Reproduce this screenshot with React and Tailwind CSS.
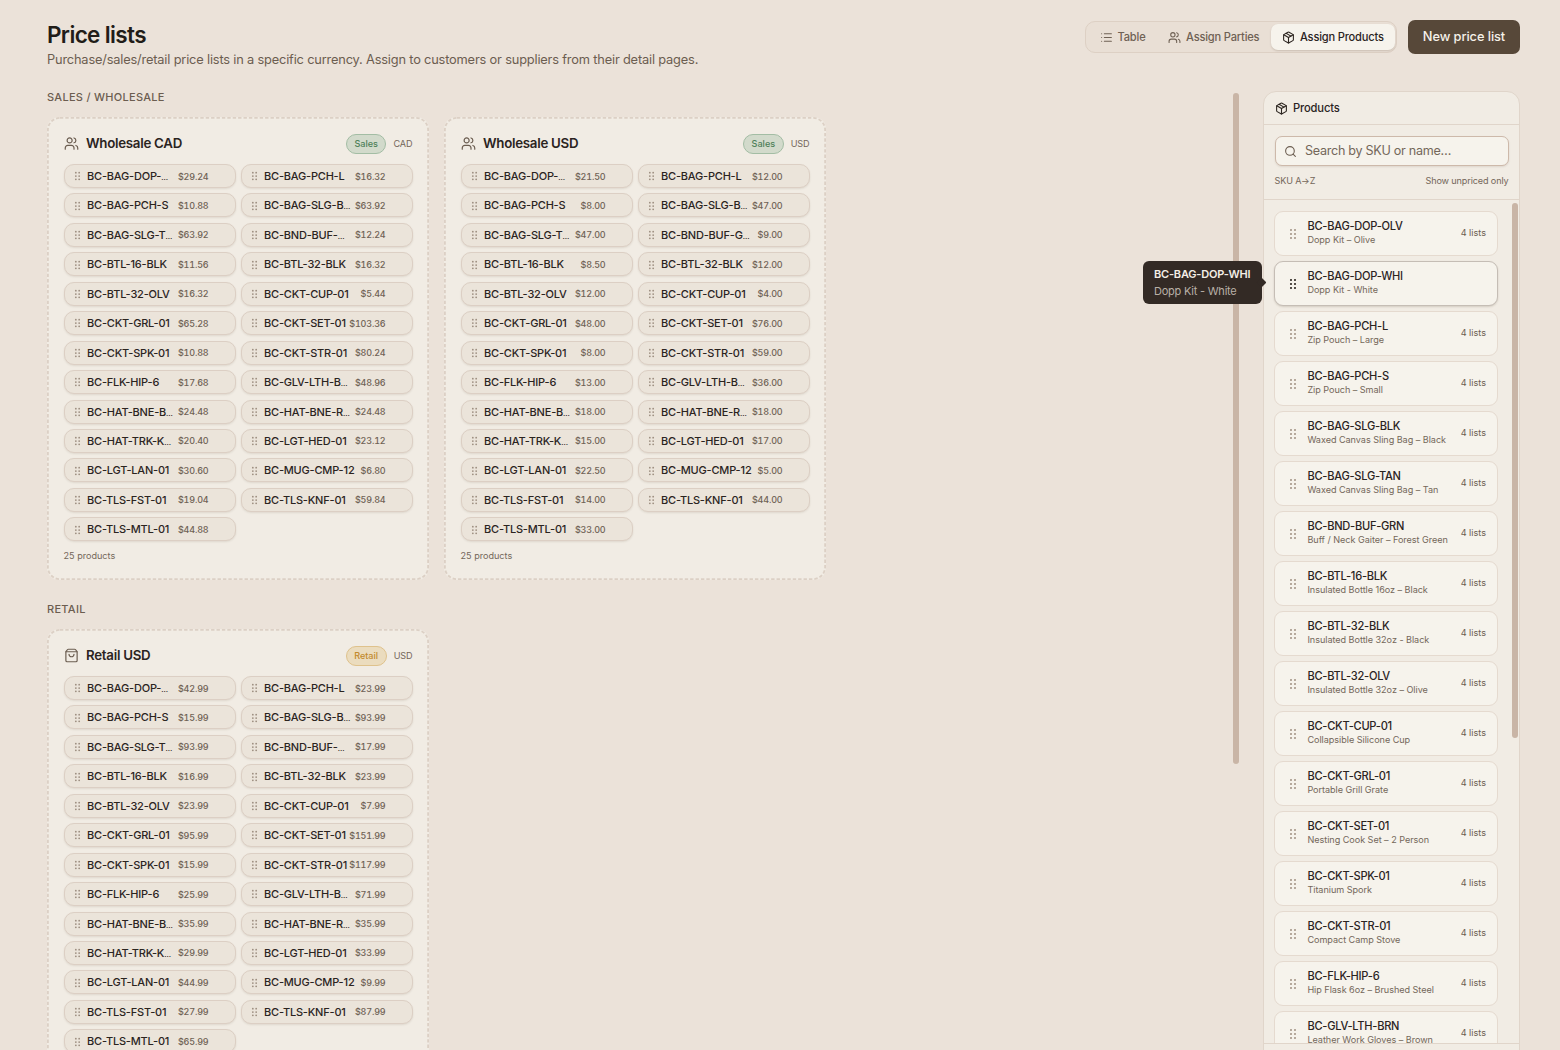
import React, { useState } from "react";
import { List, Users, Package, Search, ShoppingBag } from "lucide-react";

const SKUS = [
  "BC-BAG-DOP-…",
  "BC-BAG-PCH-L",
  "BC-BAG-PCH-S",
  "BC-BAG-SLG-B…",
  "BC-BAG-SLG-T…",
  "BC-BND-BUF-…",
  "BC-BTL-16-BLK",
  "BC-BTL-32-BLK",
  "BC-BTL-32-OLV",
  "BC-CKT-CUP-01",
  "BC-CKT-GRL-01",
  "BC-CKT-SET-01",
  "BC-CKT-SPK-01",
  "BC-CKT-STR-01",
  "BC-FLK-HIP-6",
  "BC-GLV-LTH-B…",
  "BC-HAT-BNE-B…",
  "BC-HAT-BNE-R…",
  "BC-HAT-TRK-K…",
  "BC-LGT-HED-01",
  "BC-LGT-LAN-01",
  "BC-MUG-CMP-12",
  "BC-TLS-FST-01",
  "BC-TLS-KNF-01",
  "BC-TLS-MTL-01",
];

const wholesaleCad = {
  name: "Wholesale CAD",
  kind: "Sales",
  currency: "CAD",
  prices: [
    "29.24", "16.32", "10.88", "63.92", "63.92", "12.24", "11.56", "16.32", "16.32",
    "5.44", "65.28", "103.36", "10.88", "80.24", "17.68", "48.96", "24.48", "24.48",
    "20.40", "23.12", "30.60", "6.80", "19.04", "59.84", "44.88",
  ],
};

const wholesaleUsd = {
  name: "Wholesale USD",
  kind: "Sales",
  currency: "USD",
  labels: { 5: "BC-BND-BUF-G…" },
  prices: [
    "21.50", "12.00", "8.00", "47.00", "47.00", "9.00", "8.50", "12.00", "12.00",
    "4.00", "48.00", "76.00", "8.00", "59.00", "13.00", "36.00", "18.00", "18.00",
    "15.00", "17.00", "22.50", "5.00", "14.00", "44.00", "33.00",
  ],
};

const retailUsd = {
  name: "Retail USD",
  kind: "Retail",
  currency: "USD",
  prices: [
    "42.99", "23.99", "15.99", "93.99", "93.99", "17.99", "16.99", "23.99", "23.99",
    "7.99", "95.99", "151.99", "15.99", "117.99", "25.99", "71.99", "35.99", "35.99",
    "29.99", "33.99", "44.99", "9.99", "27.99", "87.99", "65.99",
  ],
};

const products = [
  { sku: "BC-BAG-DOP-OLV", name: "Dopp Kit – Olive", lists: 4 },
  { sku: "BC-BAG-DOP-WHI", name: "Dopp Kit - White", lists: 0 },
  { sku: "BC-BAG-PCH-L", name: "Zip Pouch – Large", lists: 4 },
  { sku: "BC-BAG-PCH-S", name: "Zip Pouch – Small", lists: 4 },
  { sku: "BC-BAG-SLG-BLK", name: "Waxed Canvas Sling Bag – Black", lists: 4 },
  { sku: "BC-BAG-SLG-TAN", name: "Waxed Canvas Sling Bag – Tan", lists: 4 },
  { sku: "BC-BND-BUF-GRN", name: "Buff / Neck Gaiter – Forest Green", lists: 4 },
  { sku: "BC-BTL-16-BLK", name: "Insulated Bottle 16oz – Black", lists: 4 },
  { sku: "BC-BTL-32-BLK", name: "Insulated Bottle 32oz - Black", lists: 4 },
  { sku: "BC-BTL-32-OLV", name: "Insulated Bottle 32oz – Olive", lists: 4 },
  { sku: "BC-CKT-CUP-01", name: "Collapsible Silicone Cup", lists: 4 },
  { sku: "BC-CKT-GRL-01", name: "Portable Grill Grate", lists: 4 },
  { sku: "BC-CKT-SET-01", name: "Nesting Cook Set – 2 Person", lists: 4 },
  { sku: "BC-CKT-SPK-01", name: "Titanium Spork", lists: 4 },
  { sku: "BC-CKT-STR-01", name: "Compact Camp Stove", lists: 4 },
  { sku: "BC-FLK-HIP-6", name: "Hip Flask 6oz – Brushed Steel", lists: 4 },
  { sku: "BC-GLV-LTH-BRN", name: "Leather Work Gloves – Brown", lists: 4 },
];

// Six-dot drag handle
const Grip = ({ className }) => (
  <svg viewBox="0 0 8 12" className={className} fill="currentColor">
    {[2, 6, 10].map((y) => (
      <g key={y}>
        <circle cx="2" cy={y} r="1.05" />
        <circle cx="6" cy={y} r="1.05" />
      </g>
    ))}
  </svg>
);

const ViewTab = ({ icon: Icon, label, active, onClick }) => (
  <button
    onClick={onClick}
    className={`flex h-[26px] items-center gap-[5px] rounded-[7px] px-[11.3px] text-[11.1px] font-medium tracking-[-0.19px] whitespace-nowrap ${
      active
        ? "bg-[#f6f3ec] text-[#2b241f] shadow-[0_1px_2px_rgba(80,60,40,0.2)]"
        : "text-[#6f6154]"
    }`}
  >
    <Icon size={13} strokeWidth={2} />
    {label}
  </button>
);

const PricePill = ({ sku, price }) => {
  const clipped = sku.endsWith("…");
  return (
    <div className="flex h-[24px] items-center rounded-[10px] border border-[#dccfc4] bg-[#ebe4da] pt-[0.5px] pr-[26px] pl-[9.5px] shadow-[0_1px_2px_rgba(90,70,50,0.12)]">
      <Grip className="h-[10px] w-[7px] shrink-0 text-[#9b8c7e]" />
      <span className="ml-[6px] text-[11px] font-medium tracking-[-0.2px] whitespace-nowrap text-[#2b241f]">
        {clipped ? sku.slice(0, -1) : sku}
        {clipped && <span className="text-[7.5px]">…</span>}
      </span>
      <span className="ml-auto text-[9px] font-medium tracking-[-0.17px] whitespace-nowrap text-[#6f6255] tabular-nums">${price}</span>
    </div>
  );
};

const PriceListCard = ({ list }) => {
  const retail = list.kind === "Retail";
  const Icon = retail ? ShoppingBag : Users;
  return (
    <div className="relative h-[463px] w-[382px] shrink-0 rounded-[12px] bg-[#f1ece4] px-[16.5px] pt-[16.5px]">
      {/* drop target outline */}
      <svg className="absolute inset-0 size-full" fill="none">
        <rect x="0.9" y="0.9" width="380.2" height="461.2" rx="12" stroke="#dcd0c5" strokeWidth="1.8" strokeDasharray="3.4 2" />
      </svg>
      <div className="flex h-[21px] items-center">
        <Icon size={15} strokeWidth={1.9} className="text-[#6b5d50]" />
        <h3 className="ml-[7.5px] text-[13.3px] font-semibold tracking-[-0.27px] text-[#2b241f]">{list.name}</h3>
        <span
          className={`ml-auto flex h-[20px] items-center rounded-full border px-[7.5px] text-[9.1px] font-medium ${
            retail
              ? "border-[#dfc28c] bg-[#ebdcbe] text-[#c28a2c]"
              : "border-[#a3bda4] bg-[#d2dacb] text-[#4d7f58]"
          }`}
        >
          {list.kind}
        </span>
        <span className="ml-[7px] text-[9.1px] tracking-[-0.1px] text-[#74675a]">{list.currency}</span>
      </div>
      <div className="mt-[10px] grid grid-cols-2 gap-x-[5px] gap-y-[5.45px]">
        {list.prices.map((price, i) => (
          <PricePill key={i} sku={list.labels?.[i] || SKUS[i]} price={price} />
        ))}
      </div>
      <p className="mt-[8px] text-[9.1px] leading-[13px] text-[#74675a]">{list.prices.length} products</p>
    </div>
  );
};

const Section = ({ title, lists }) => (
  <section>
    <h2 className="text-[11px] leading-[13px] font-medium tracking-[0.28px] text-[#6b5d50] uppercase">{title}</h2>
    <div className="mt-[12.5px] flex gap-[15px]">
      {lists.map((list) => (
        <PriceListCard key={list.name} list={list} />
      ))}
    </div>
  </section>
);

const ProductRow = ({ product, hovered }) => (
  <div
    className={`flex h-[45px] shrink-0 items-center rounded-[9px] border bg-[#f6f3ec] pr-[11px] pl-[14px] ${
      hovered ? "border-[#c5bdb5] shadow-[0_1px_2px_rgba(80,60,40,0.18)]" : "border-[#e5dacf]"
    }`}
  >
    <Grip className={`h-[12px] w-[8px] shrink-0 ${hovered ? "text-[#2b241f]" : "text-[#a69789]"}`} />
    <div className="ml-[10px] pb-px whitespace-nowrap">
      <div className="text-[11.1px] leading-[14px] font-medium tracking-[-0.26px] text-[#2b241f]">{product.sku}</div>
      <div className="text-[9.1px] leading-[14px] tracking-[-0.04px] text-[#74675a]">{product.name}</div>
    </div>
    {product.lists > 0 && (
      <span className="ml-auto pb-px text-[9.1px] whitespace-nowrap text-[#6b5d50]">{product.lists} lists</span>
    )}
  </div>
);

const ProductPanel = () => {
  const [query, setQuery] = useState("");
  const visible = products.filter((p) =>
    (p.sku + " " + p.name).toLowerCase().includes(query.toLowerCase())
  );

  return (
    <aside className="flex h-[980px] w-[257px] shrink-0 flex-col rounded-[13px] border border-[#e0d5ca] bg-[#f1ece4]">
      <div className="flex h-[33px] shrink-0 items-center gap-[5px] border-b border-[#e0d5ca] pl-[11px] text-[11.2px] font-medium tracking-[-0.15px] text-[#2b241f]">
        <Package size={13} strokeWidth={2} />
        Products
      </div>
      <div className="h-[75px] shrink-0 border-b border-[#e0d5ca] px-[10.5px] pt-[11px]">
        <label className="flex h-[30px] items-center rounded-[7px] border border-[#cdb9aa] bg-[#f6f3ec] pl-[8.5px] shadow-[0_1px_2px_rgba(80,60,40,0.12)]">
          <Search size={13} strokeWidth={2} className="shrink-0 text-[#6b5d50]" />
          <input
            value={query}
            onChange={(e) => setQuery(e.target.value)}
            placeholder="Search by SKU or name…"
            className="ml-[8px] w-full bg-transparent text-[12.6px] tracking-[-0.29px] text-[#2b241f] outline-none placeholder:text-[#74675a]"
          />
        </label>
        <div className="mt-[8px] flex justify-between text-[9.1px] leading-[14px] tracking-[-0.13px] text-[#74675a]">
          <button>SKU A→Z</button>
          <button>Show unpriced only</button>
        </div>
      </div>
      <div className="flex h-[844px] shrink-0 overflow-hidden border-b border-[#e0d5ca]">
        <div className="flex w-[234px] flex-col gap-[5px] pt-[11px] pl-[10.4px]">
          {visible.map((p) => (
            <ProductRow key={p.sku} product={p} hovered={p.sku === "BC-BAG-DOP-WHI"} />
          ))}
        </div>
        <div className="mt-[3px] ml-auto mr-px h-[535px] w-[6px] rounded-full bg-[#c9b5a6]" />
      </div>
    </aside>
  );
};

const App = () => {
  const [view, setView] = useState("products");

  return (
    <div className="relative h-[1050px] w-[1560px] overflow-hidden bg-[#ebe2d9] pr-[40px] pl-[47px] font-['Inter',sans-serif]">
      <header className="flex h-[91px] justify-between">
        <div className="pt-[22px]">
          <h1 className="text-[22.5px] leading-[26px] font-semibold tracking-[-0.64px] text-[#211c18]">Price lists</h1>
          <p className="mt-[3px] text-[12.8px] leading-[17px] tracking-[-0.17px] text-[#6b5d50]">
            Purchase/sales/retail price lists in a specific currency. Assign to customers or suppliers from their detail pages.
          </p>
        </div>
        <div className="flex gap-[11px] pt-[20px]">
          <div className="mt-px flex h-[32px] items-center rounded-[10px] border border-[#ddd0c4] bg-[#e9dfd5] pr-px pl-[2px]">
            <ViewTab icon={List} label="Table" active={view === "table"} onClick={() => setView("table")} />
            <ViewTab icon={Users} label="Assign Parties" active={view === "parties"} onClick={() => setView("parties")} />
            <ViewTab icon={Package} label="Assign Products" active={view === "products"} onClick={() => setView("products")} />
          </div>
          <button className="h-[34px] w-[112px] rounded-[7px] bg-[#574839] text-[12.8px] font-medium tracking-[-0.07px] whitespace-nowrap text-[#f6f1e9]">
            New price list
          </button>
        </div>
      </header>

      <div className="flex">
        <main className="flex w-[1186px] shrink-0 flex-col gap-[23.5px]">
          <Section title="Sales / Wholesale" lists={[wholesaleCad, wholesaleUsd]} />
          <Section title="Retail" lists={[retailUsd]} />
        </main>
        <div className="mt-[2px] h-[671px] w-[6px] shrink-0 rounded-full bg-[#c9b5a6]" />
        <div className="ml-auto">
          <ProductPanel />
        </div>
      </div>

      {/* Tooltip for the hovered product */}
      <div className="absolute top-[261px] left-[1143px] h-[43px] w-[119px] rounded-[6px] bg-[#332a25] pt-[6px] pl-[11px] whitespace-nowrap">
        <div className="text-[11px] leading-[15px] font-semibold tracking-[-0.2px] text-[#f3eee6]">BC-BAG-DOP-WHI</div>
        <div className="mt-[2px] text-[11px] leading-[15px] tracking-[-0.22px] text-[#b9b0a7]">Dopp Kit - White</div>
        <div className="absolute top-[18px] -right-[3px] size-[7px] rotate-45 rounded-[1px] bg-[#332a25]" />
      </div>
    </div>
  );
};

export default App;
